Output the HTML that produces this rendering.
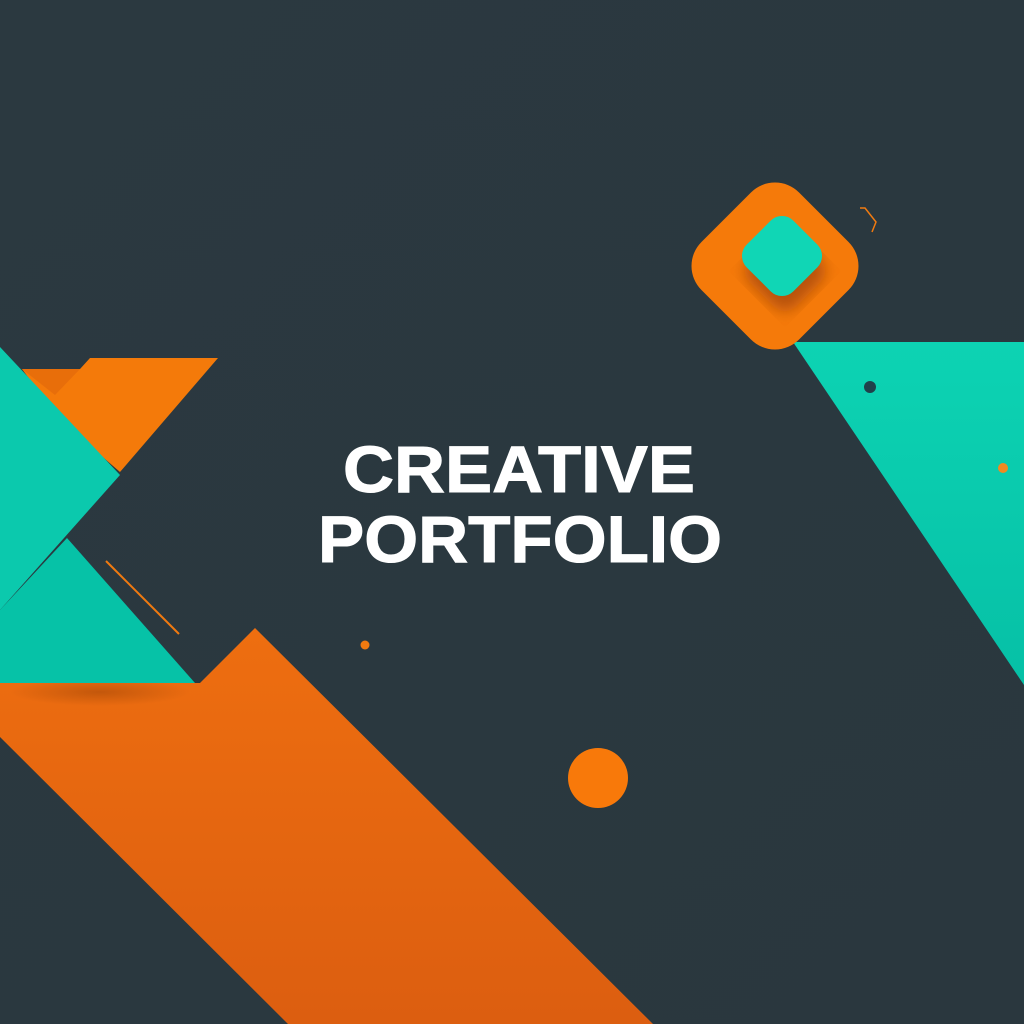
<!DOCTYPE html>
<html><head><meta charset="utf-8"><style>
html,body{margin:0;padding:0;background:#2b3840;}
svg{display:block}
</style></head><body>
<svg width="1024" height="1024" viewBox="0 0 1024 1024" xmlns="http://www.w3.org/2000/svg">
<defs>
<linearGradient id="bg" x1="0" y1="0" x2="1" y2="1"><stop offset="0" stop-color="#2b3940"/><stop offset="1" stop-color="#2a373e"/></linearGradient>
<linearGradient id="ob" x1="0" y1="0" x2="0" y2="1"><stop offset="0" stop-color="#ee6e10"/><stop offset="1" stop-color="#dc5e10"/></linearGradient>
<linearGradient id="tr" x1="0" y1="0" x2="0" y2="1"><stop offset="0" stop-color="#0dd3b3"/><stop offset="1" stop-color="#06c0a6"/></linearGradient>
<radialGradient id="sh" cx="0.5" cy="0.5" r="0.5"><stop offset="0" stop-color="#a84a08" stop-opacity="0.6"/><stop offset="1" stop-color="#a84a08" stop-opacity="0"/></radialGradient>
<filter id="blur"><feGaussianBlur stdDeviation="7"/></filter>
</defs>
<rect width="1024" height="1024" fill="url(#bg)"/>
<polygon points="0,683 200,683 255,628 653,1024 288,1024 0,737" fill="url(#ob)"/>
<ellipse cx="100" cy="692" rx="90" ry="14" fill="url(#sh)"/>
<polygon points="22,369 80,369 90,358 218,358 120,472 60,420" fill="#f47a0a"/>
<polygon points="22,369 80,369 55,395" fill="#e86e0a"/>
<polygon points="67,538 195,683 0,683 0,610" fill="#06c2a7"/>
<polygon points="0,347 120,475 0,610" fill="#0bc9ad"/>
<line x1="106" y1="561" x2="179" y2="634" stroke="#f07a10" stroke-width="2"/>
<circle cx="365" cy="645" r="4.5" fill="#f07a10"/>
<circle cx="598" cy="778" r="30" fill="#f8790a"/>
<polygon points="793,342 1024,342 1024,685" fill="url(#tr)"/>
<circle cx="870" cy="387" r="6" fill="#20404a"/>
<circle cx="1003" cy="468" r="5" fill="#f28a20"/>
<rect x="706" y="197" width="138" height="138" rx="34" transform="rotate(45 775 266)" fill="#f57a0a"/>
<rect x="752" y="238" width="66" height="66" rx="16" transform="rotate(45 785 271)" fill="#a8480a" filter="url(#blur)" opacity="0.8"/>
<rect x="749" y="223" width="66" height="66" rx="16" transform="rotate(45 782 256)" fill="#10d6b5"/>
<polyline points="860,208 865,208 876,222 872,232" fill="none" stroke="#f07a10" stroke-width="1.5"/>
<text x="519" y="492" text-anchor="middle" font-family="Liberation Sans, sans-serif" font-weight="bold" font-size="66" fill="#ffffff" stroke="#ffffff" stroke-width="1" textLength="352" lengthAdjust="spacingAndGlyphs">CREATIVE</text>
<text x="520" y="562" text-anchor="middle" font-family="Liberation Sans, sans-serif" font-weight="bold" font-size="66" fill="#ffffff" stroke="#ffffff" stroke-width="1" textLength="404" lengthAdjust="spacingAndGlyphs">PORTFOLIO</text>
</svg>
</body></html>
